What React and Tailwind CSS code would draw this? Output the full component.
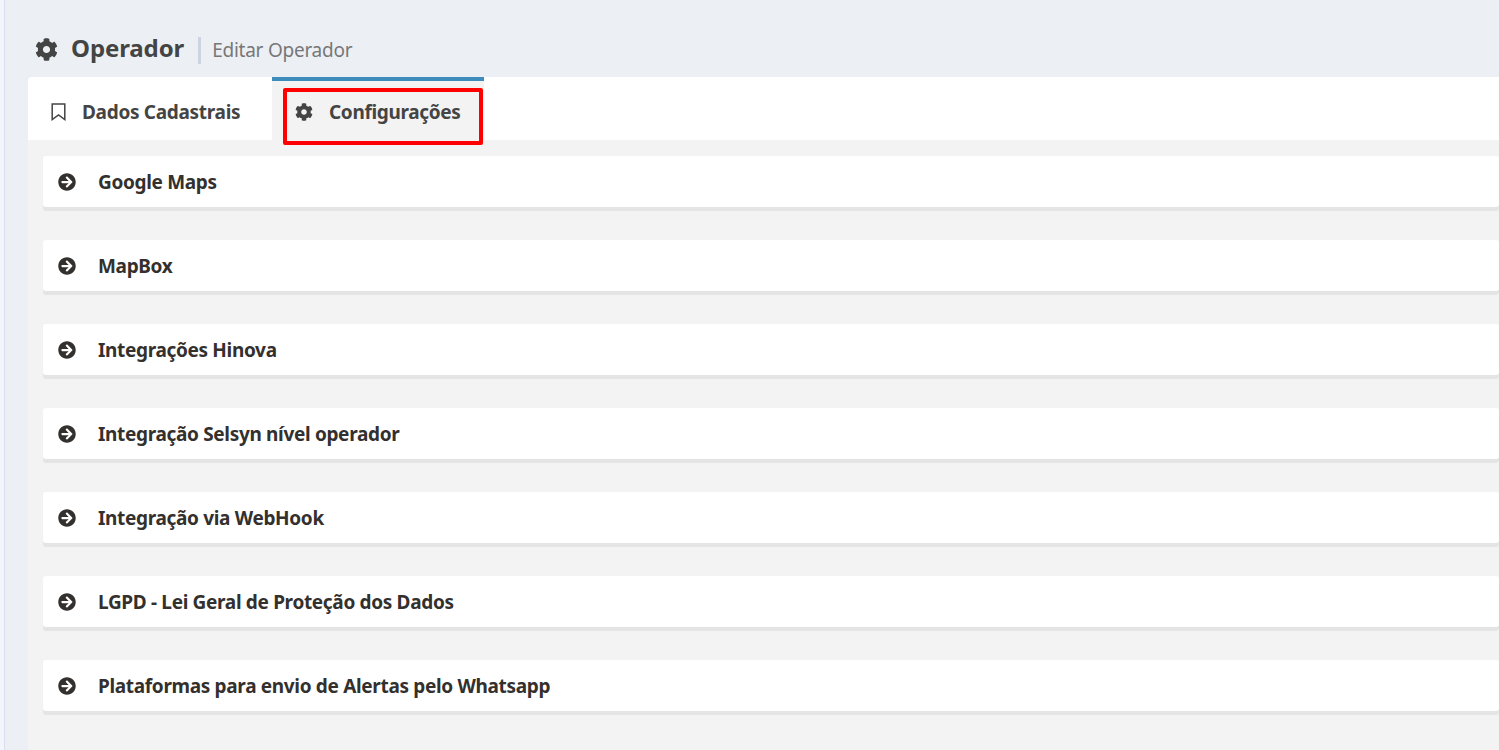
import { FaCog, FaArrowCircleRight } from "react-icons/fa";

const sections = [
  "Google Maps",
  "MapBox",
  "Integrações Hinova",
  "Integração Selsyn nível operador",
  "Integração via WebHook",
  "LGPD - Lei Geral de Proteção dos Dados",
  "Plataformas para envio de Alertas pelo Whatsapp",
];

// One collapsed accordion row
const SectionRow = ({ title }) => (
  <div className="flex h-[51px] items-center rounded-[3px] bg-white pl-[15px] shadow-[0_4px_1px_#e4e4e4]">
    <FaArrowCircleRight className="h-[18px] w-[18px] text-[#33302e]" />
    <span className="mt-[1px] ml-[22px] text-[19px] font-bold tracking-[-0.33px] text-[#33302e]">{title}</span>
  </div>
);

export default function App() {
  return (
    <div className="flex h-[750px] w-[1499px] overflow-hidden bg-[#ecf0f5] font-['Noto_Sans',sans-serif]">
      <div className="w-[5px] shrink-0 border-r border-[#d9dfee] bg-[#f3f5fa]" />

      <div className="ml-[23px] flex min-w-0 flex-1 flex-col">
        {/* page title */}
        <div className="flex h-[77px] items-end pb-[12px] pl-[7px]">
          <FaCog className="mb-[4px] h-[23px] w-[23px] text-[#444]" />
          <h1 className="ml-[13px] text-[24px] leading-[34px] font-bold tracking-[-0.1px] text-[#444]">Operador</h1>
          <span className="mb-[1px] ml-[14px] h-[27px] w-[3px] bg-[#ced4df]" />
          <span className="mb-[-1px] ml-[11px] text-[19px] leading-[32px] tracking-[-0.25px] text-[#777]">Editar Operador</span>
        </div>

        {/* tabs */}
        <div className="relative flex h-[63px] rounded-tl-[4px] bg-white">
          <div className="flex w-[244px] items-center pt-[7px] pl-[23px]">
            <svg viewBox="0 0 15 18" className="mt-[-1px] h-[18px] w-[15px] text-[#444]" fill="none" stroke="currentColor" strokeWidth="1.5">
              <path d="M1.2 1h12.6v15.6L7.5 12 1.2 16.6z" />
            </svg>
            <span className="ml-[16px] text-[19px] font-bold tracking-[-0.3px] text-[#444]">Dados Cadastrais</span>
          </div>
          <div className="flex w-[212px] items-center border-t-4 border-[#3c8dbc] bg-[#f3f3f3] pt-[3px] pl-[23px]">
            <FaCog className="h-[18px] w-[18px] text-[#444]" />
            <span className="ml-[16px] text-[19px] font-bold tracking-[-0.33px] text-[#444]">Configurações</span>
          </div>
          {/* red annotation over the active tab */}
          <div className="absolute top-[11px] left-[255px] h-[57px] w-[200px] rounded-[2px] border-[4px] border-[#ff0000]" />
        </div>

        {/* accordion */}
        <div className="flex flex-1 flex-col gap-[33px] bg-[#f3f3f3] pt-[16px] pl-[15px]">
          {sections.map((title) => (
            <SectionRow key={title} title={title} />
          ))}
        </div>
      </div>
    </div>
  );
}
